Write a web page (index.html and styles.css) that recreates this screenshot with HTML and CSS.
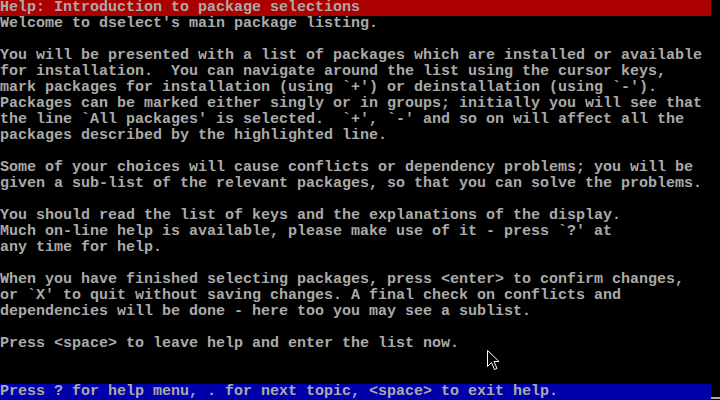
FILE: index.html
```html
<!DOCTYPE html>
<html lang="en">

<head>
  <meta charset="UTF-8">
  <title>dselect - help</title>
  <link rel="stylesheet" href="styles.css">
</head>

<body>
  <div class="screen">
    <div class="title-bar">Help: Introduction to package selections</div>
    <pre class="help-text">Welcome to dselect's main package listing.

You will be presented with a list of packages which are installed or available
for installation.  You can navigate around the list using the cursor keys,
mark packages for installation (using `+') or deinstallation (using `-').
Packages can be marked either singly or in groups; initially you will see that
the line `All packages' is selected.  `+', `-' and so on will affect all the
packages described by the highlighted line.

Some of your choices will cause conflicts or dependency problems; you will be
given a sub-list of the relevant packages, so that you can solve the problems.

You should read the list of keys and the explanations of the display.
Much on-line help is available, please make use of it - press `?' at
any time for help.

When you have finished selecting packages, press &lt;enter&gt; to confirm changes,
or `X' to quit without saving changes. A final check on conflicts and
dependencies will be done - here too you may see a sublist.

Press &lt;space&gt; to leave help and enter the list now.</pre>
    <div class="status-row">
      <div class="status-bar">Press ? for help menu, . for next topic, &lt;space&gt; to exit help.</div>
      <div class="cursor-cell"><span class="cursor"></span></div>
    </div>

    <svg class="pointer" width="14" height="22" viewBox="0 0 14 22">
      <polygon points="0.5,0.5 0.5,16.5 4.5,12.5 7.5,19.5 10,18.5 7,11.5 12,11.5" fill="#000" stroke="#fff" stroke-width="1" />
    </svg>
  </div>
</body>

</html>
```

FILE: styles.css
```css
html,
body {
  margin: 0;
  padding: 0;
  background: #000;
}

.screen {
  position: relative;
  width: 720px;
  height: 400px;
  display: flex;
  flex-direction: column;
  font-family: "Liberation Mono", "DejaVu Sans Mono", monospace;
  font-size: 15px;
  font-weight: bold;
  line-height: 16px;
  color: #aaaaaa;
  overflow: hidden;
}

.title-bar {
  width: 711px;
  height: 16px;
  background: #aa0000;
  white-space: pre;
}

.help-text {
  flex: 1;
  margin: 0;
  font: inherit;
  white-space: pre;
}

.status-row {
  display: flex;
  height: 16px;
}

.status-bar {
  width: 711px;
  background: #0000aa;
  white-space: pre;
}

.cursor-cell {
  width: 9px;
  display: flex;
  flex-direction: column;
  justify-content: flex-end;
  padding-bottom: 1px;
}

.cursor {
  display: block;
  height: 2px;
  background: #aaaaaa;
}

.pointer {
  position: absolute;
  left: 487px;
  top: 350px;
}
```
